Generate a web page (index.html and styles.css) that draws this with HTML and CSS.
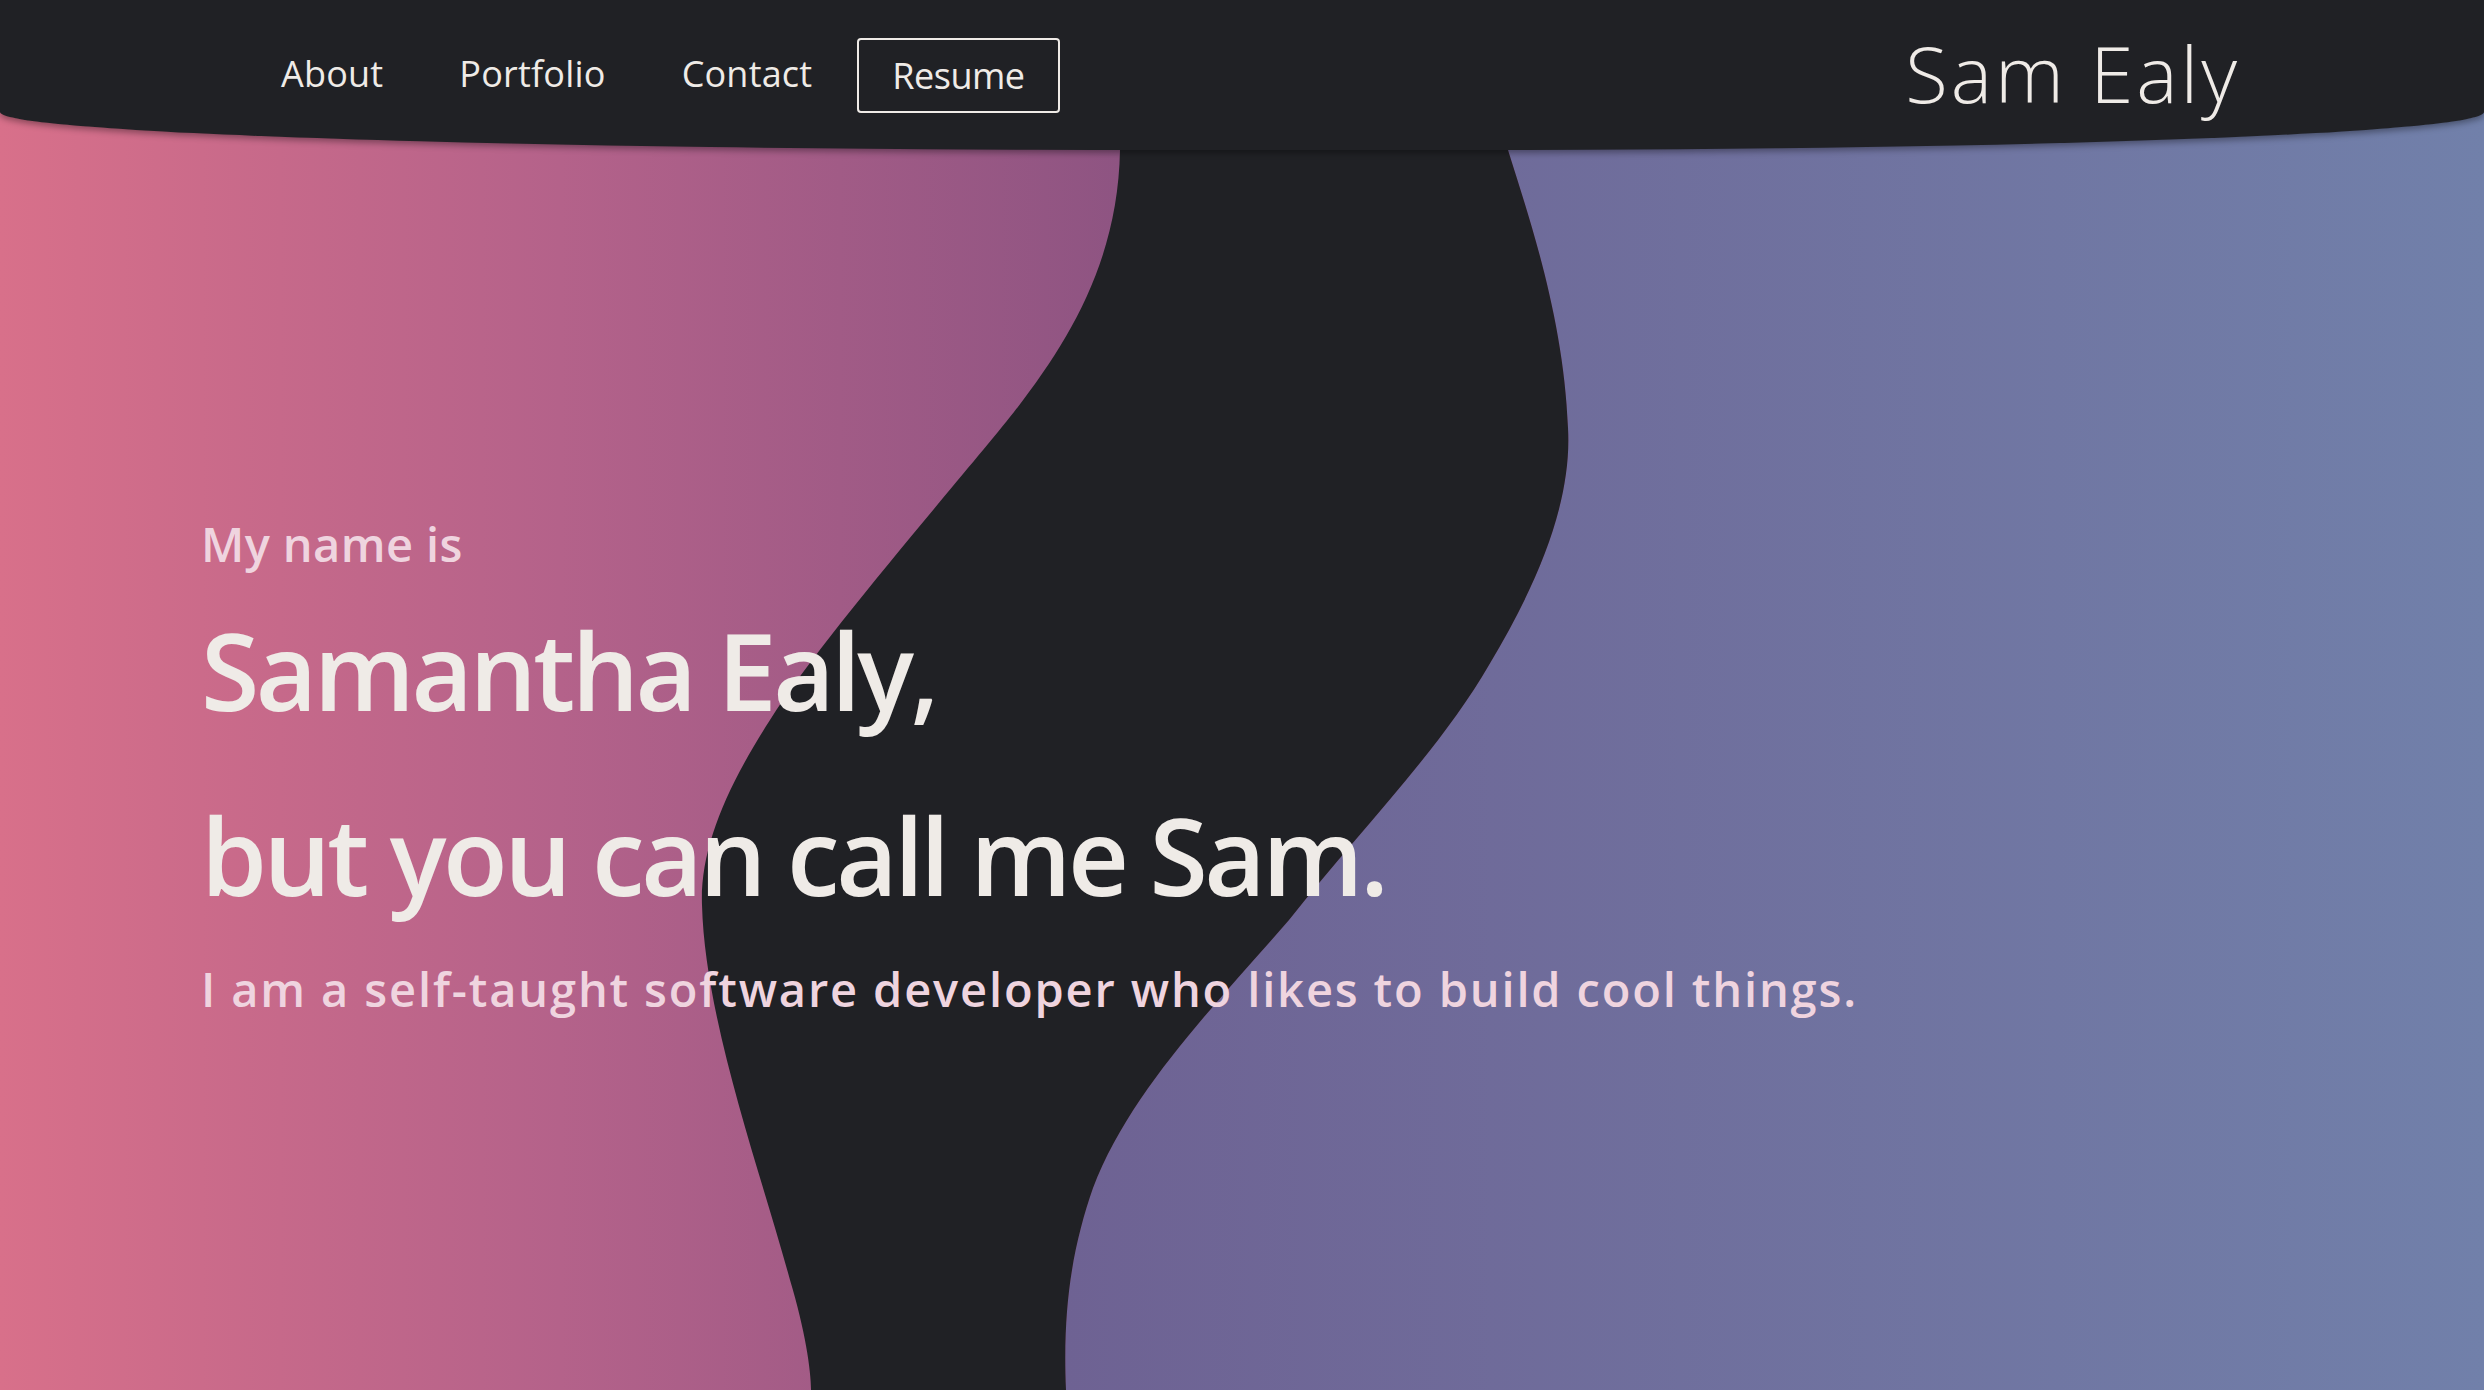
FILE: index.html
```html
<!DOCTYPE html>
<html lang="en">
<head>
<meta charset="utf-8">
<title>Sam Ealy</title>
<link rel="stylesheet" href="styles.css">
</head>
<body>
<div class="page">
  <svg class="wave" viewBox="0 0 2484 1390" preserveAspectRatio="none" aria-hidden="true">
    <defs>
      <linearGradient id="rightGrad" gradientUnits="userSpaceOnUse" x1="1066" y1="0" x2="2484" y2="0">
        <stop offset="0" stop-color="#6e6293"/>
        <stop offset="1" stop-color="#7180aa"/>
      </linearGradient>
    </defs>
    <path d="M1508,0 L1508,150 C1530,220 1564,320 1568,428 C1572,500 1540,580 1489,665 C1440,750 1360,830 1289,920 C1220,1000 1130,1090 1093,1188 C1075,1240 1062,1300 1066,1390 L2484,1390 L2484,0 Z" fill="url(#rightGrad)"/>
    <path d="M1120,0 L1120,150 C1118,260 1070,340 1014,412 C960,480 820,640 770,720 C725,790 700,850 702,905 C705,1020 760,1170 790,1280 C805,1330 811,1370 811,1390 L1066,1390 C1062,1300 1075,1240 1093,1188 C1130,1090 1220,1000 1289,920 C1360,830 1440,750 1489,665 C1540,580 1572,500 1568,428 C1564,320 1530,220 1508,150 L1508,0 Z" fill="#202125"/>
  </svg>
  <header class="site-header">
    <nav class="nav">
      <a class="nav-link" href="#about">About</a>
      <a class="nav-link" href="#portfolio">Portfolio</a>
      <a class="nav-link" href="#contact">Contact</a>
      <a class="nav-resume" href="#resume">Resume</a>
    </nav>
    <a class="logo" href="#">Sam Ealy</a>
  </header>
  <main class="hero">
    <p class="intro">My name is</p>
    <h1 class="headline">Samantha Ealy,<br>but you can call me Sam.</h1>
    <p class="tagline">I am a self-taught software developer who likes to build cool things.</p>
  </main>
</div>
</body>
</html>
```
FILE: styles.css
```css
* { box-sizing: border-box; }
html, body { margin: 0; padding: 0; }
body {
  font-family: "Open Sans", "Noto Sans", sans-serif;
  color: #efebe7;
  overflow: hidden;
}
.page {
  position: relative;
  height: 100vh;
  background: linear-gradient(90deg, #d8708a 0px, #b4628a 560px, #8e5482 1120px, #8c5382 1600px);
  overflow: hidden;
}
.wave {
  position: absolute;
  inset: 0;
  width: 100%;
  height: 100%;
}
.site-header {
  position: relative;
  z-index: 2;
  height: 150px;
  display: flex;
  align-items: center;
  justify-content: space-between;
  padding: 0 244px 0 281px;
  background: #202125;
  border-bottom-left-radius: 1150px 38px;
  border-bottom-right-radius: 1000px 38px;
  box-shadow: 0 3px 6px rgba(0, 0, 0, 0.35);
}
.nav {
  display: flex;
  align-items: center;
}
.nav-link, .nav-resume {
  color: #efebe7;
  text-decoration: none;
  font-size: 36px;
  font-weight: 400;
}
.nav-link {
  margin-right: 76px;
  margin-bottom: 4px;
  letter-spacing: 0.2px;
}
.nav-link:nth-child(3) { margin-right: 45px; }
.nav-resume {
  border: 2px solid #efebe7;
  border-radius: 4px;
  padding: 12px 33px;
  line-height: 47px;
  letter-spacing: -0.5px;
}
.logo {
  color: #efebe7;
  text-decoration: none;
  font-size: 78px;
  font-weight: 300;
  letter-spacing: 3px;
  margin-bottom: 4px;
}
.hero {
  position: relative;
  z-index: 1;
  padding: 366px 0 0 201px;
}
.intro {
  margin: 0;
  font-size: 47px;
  line-height: 56px;
  font-weight: 600;
  letter-spacing: 0.4px;
  color: #efd4df;
}
.headline {
  margin: 6px 0 0;
  font-size: 106px;
  line-height: 185px;
  font-weight: 600;
  letter-spacing: -3.5px;
  color: #efebe7;
}
.tagline {
  margin: 13px 0 0;
  font-size: 47px;
  line-height: 56px;
  font-weight: 600;
  letter-spacing: 1.85px;
  color: #efd4df;
}
```
